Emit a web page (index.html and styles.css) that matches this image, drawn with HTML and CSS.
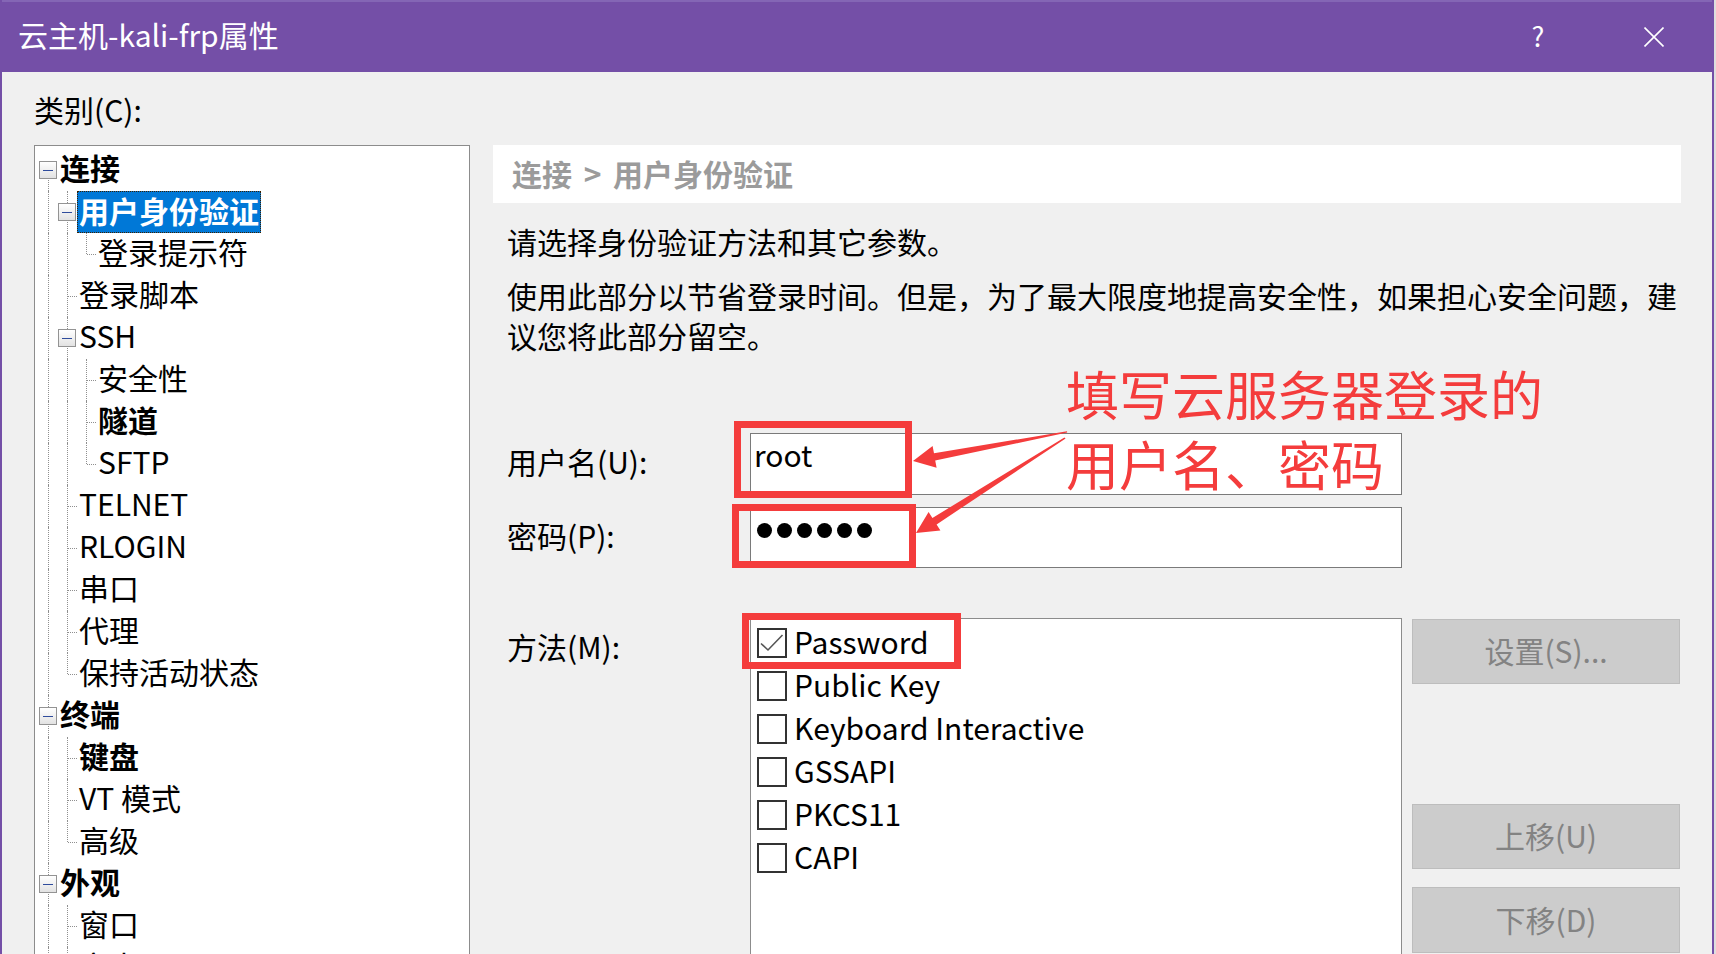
FILE: index.html
```html
<!DOCTYPE html>
<html lang="zh-CN">
<head>
<meta charset="utf-8">
<title>云主机-kali-frp属性</title>
<link rel="stylesheet" href="styles.css">
</head>
<body>
<div class="window">
  <header class="titlebar">
    <div class="title">云主机-kali-frp属性</div>
    <div class="tbtn help">?</div>
    <div class="tbtn close">
      <svg width="20" height="20" viewBox="0 0 20 20"><path d="M0.5 0.5 L19.5 19.5 M19.5 0.5 L0.5 19.5" stroke="#fff" stroke-width="1.6" fill="none"/></svg>
    </div>
  </header>
  <main class="client">
    <div class="cat">类别(C):</div>
    <div class="columns">
      <div class="tree">
        <div class="row"><span class="slot b"><span class="tog"></span></span><span class="lbl b">连接</span></div>
        <div class="row"><span class="g on"></span><span class="slot tb"><span class="tog"></span></span><span class="lbl b sel">用户身份验证</span></div>
        <div class="row"><span class="g on"></span><span class="g on"></span><span class="slot t h"></span><span class="lbl">登录提示符</span></div>
        <div class="row"><span class="g on"></span><span class="slot tb h"></span><span class="lbl">登录脚本</span></div>
        <div class="row"><span class="g on"></span><span class="slot tb"><span class="tog"></span></span><span class="lbl">SSH</span></div>
        <div class="row"><span class="g on"></span><span class="g on"></span><span class="slot tb h"></span><span class="lbl">安全性</span></div>
        <div class="row"><span class="g on"></span><span class="g on"></span><span class="slot tb h"></span><span class="lbl b">隧道</span></div>
        <div class="row"><span class="g on"></span><span class="g on"></span><span class="slot t h"></span><span class="lbl">SFTP</span></div>
        <div class="row"><span class="g on"></span><span class="slot tb h"></span><span class="lbl">TELNET</span></div>
        <div class="row"><span class="g on"></span><span class="slot tb h"></span><span class="lbl">RLOGIN</span></div>
        <div class="row"><span class="g on"></span><span class="slot tb h"></span><span class="lbl">串口</span></div>
        <div class="row"><span class="g on"></span><span class="slot tb h"></span><span class="lbl">代理</span></div>
        <div class="row"><span class="g on"></span><span class="slot t h"></span><span class="lbl">保持活动状态</span></div>
        <div class="row"><span class="slot tb"><span class="tog"></span></span><span class="lbl b">终端</span></div>
        <div class="row"><span class="g on"></span><span class="slot tb h"></span><span class="lbl b">键盘</span></div>
        <div class="row"><span class="g on"></span><span class="slot tb h"></span><span class="lbl">VT 模式</span></div>
        <div class="row"><span class="g on"></span><span class="slot t h"></span><span class="lbl">高级</span></div>
        <div class="row"><span class="slot tb"><span class="tog"></span></span><span class="lbl b">外观</span></div>
        <div class="row"><span class="g on"></span><span class="slot tb h"></span><span class="lbl">窗口</span></div>
        <div class="row"><span class="g on"></span><span class="slot tb h"></span><span class="lbl">突出</span></div>
      </div>
      <section class="panel">
        <div class="crumb">连接<span class="sep">&gt;</span>用户身份验证</div>
        <p class="desc d1">请选择身份验证方法和其它参数。</p>
        <p class="desc d2">使用此部分以节省登录时间。但是，为了最大限度地提高安全性，如果担心安全问题，建议您将此部分留空。</p>
        <div class="form">
          <div class="flabel">用户名(U):</div>
          <div class="input"><span class="val">root</span></div>
          <div></div>
          <div class="flabel">密码(P):</div>
          <div class="input pw"><span class="dot"></span><span class="dot"></span><span class="dot"></span><span class="dot"></span><span class="dot"></span><span class="dot"></span></div>
          <div></div>
          <div class="flabel mlabel">方法(M):</div>
          <div class="methods">
            <div class="m"><span class="cb"><svg width="26" height="26" viewBox="0 0 26 26"><path d="M2 13.5 L9 20 L23.5 5" stroke="#555" stroke-width="1.6" fill="none"/></svg></span><span class="mt">Password</span></div>
            <div class="m"><span class="cb"></span><span class="mt">Public Key</span></div>
            <div class="m"><span class="cb"></span><span class="mt">Keyboard Interactive</span></div>
            <div class="m"><span class="cb"></span><span class="mt">GSSAPI</span></div>
            <div class="m"><span class="cb"></span><span class="mt">PKCS11</span></div>
            <div class="m"><span class="cb"></span><span class="mt">CAPI</span></div>
          </div>
          <div class="btns">
            <div class="btn">设置(S)...</div>
            <div class="btn up">上移(U)</div>
            <div class="btn down">下移(D)</div>
          </div>
        </div>
      </section>
    </div>
  </main>
</div>

<svg class="marks" width="1716" height="954" viewBox="0 0 1716 954">
  <g fill="none" stroke="#f43c3c" stroke-width="7">
    <rect x="737.5" y="424.5" width="171" height="70"/>
    <rect x="735.5" y="507.5" width="177" height="57"/>
    <rect x="745.5" y="616.5" width="212" height="49"/>
  </g>
  <g fill="#f43c3c">
    <polygon points="1067,431.2 934,453.3 932.6,446.1 913,461 936.6,467.7 935.2,460.6 1067.2,432.6"/>
    <polygon points="1065.6,438.6 936.6,524.4 940.4,530.5 916,533 928.6,511.9 932.4,518 1064.4,437.4"/>
  </g>
</svg>
<div class="note">填写云服务器登录的<br>用户名、密码</div>
</body>
</html>
```
FILE: styles.css
```css
* { box-sizing: border-box; }
html, body { margin: 0; width: 1716px; height: 954px; overflow: hidden; }
body {
  position: relative;
  background: #dedede;
  font-family: "Noto Sans CJK SC", "Noto Sans", sans-serif;
  color: #000;
}
.window {
  width: 1714px;
  height: 954px;
  background: #f0f0f0;
  border-left: 2px solid #744fa7;
  border-right: 2px solid #744fa7;
  display: flex;
  flex-direction: column;
  overflow: hidden;
}
.titlebar {
  flex: none;
  height: 72px;
  background: #744fa7;
  border-top: 2px solid #8466b5;
  display: flex;
  align-items: center;
  color: #fff;
}
.title { flex: 1; padding: 0 0 6px 16px; font-size: 30px; line-height: 40px; }
.tbtn { width: 116px; height: 70px; display: flex; align-items: center; justify-content: center; }
.help { font-size: 27px; line-height: 30px; padding-bottom: 2px; }
.close svg { display: block; }

.client { flex: 1; padding: 17px 31px 0 32px; min-height: 0; }
.cat { font-size: 30px; line-height: 40px; height: 40px; }
.columns { display: flex; gap: 23px; margin-top: 16px; }

/* tree */
.tree {
  flex: none;
  width: 436px;
  height: 830px;
  background: #fff;
  border: 1px solid #8c8c8c;
  padding: 3px 0 0 4px;
  overflow: hidden;
}
.row { display: flex; height: 42px; font-size: 30px; white-space: nowrap; }
.g, .slot { position: relative; flex: none; width: 19px; height: 42px; }
.g.on::before {
  content: ""; position: absolute; left: 9px; top: 0; height: 42px;
  border-left: 1px dotted #8f8f8f;
}
.slot.t::before, .slot.tb::before, .slot.b::before {
  content: ""; position: absolute; left: 9px; border-left: 1px dotted #8f8f8f;
}
.slot.t::before { top: 0; height: 21px; }
.slot.tb::before { top: 0; height: 42px; }
.slot.b::before { top: 21px; height: 21px; }
.slot.h::after {
  content: ""; position: absolute; left: 10px; top: 21px; width: 9px;
  border-top: 1px dotted #8f8f8f;
}
.tog {
  position: absolute; left: 0; top: 12px; width: 18px; height: 18px;
  border: 1px solid #939393;
  background: linear-gradient(#ffffff, #e2e2e2);
  z-index: 1;
}
.tog::after {
  content: ""; position: absolute; left: 3px; right: 3px; top: 8px; height: 1px;
  background: #2f4c9c;
}
.lbl { display: block; height: 42px; padding: 0 2px; line-height: 37px; }
.lbl.b { font-weight: 700; }
.lbl.sel {
  background: #0078d7; color: #fff;
  border: 1px dotted #3a2000;
  padding: 0 1px; line-height: 37px;
}

/* right panel */
.panel { flex: 1; min-width: 0; }
.crumb {
  height: 58px; background: #fff;
  padding: 1px 0 0 19px;
  font-size: 30px; line-height: 54px; font-weight: 700; color: #9b9b9b;
  white-space: nowrap;
}
.sep { display: inline-block; width: 41px; text-align: center; }
.desc { margin: 0; padding-left: 14px; font-size: 30px; line-height: 40px; }
.d1 { margin-top: 18px; }
.d2 { margin-top: 14px; }

.form {
  display: grid;
  grid-template-columns: 233px 652px 268px;
  column-gap: 10px;
  row-gap: 12px;
  padding-left: 14px;
  margin-top: 78px;
  font-size: 30px;
}
.flabel { align-self: center; line-height: 40px; padding-bottom: 6px; }
.mlabel { align-self: start; margin-top: 46px; }
.input {
  height: 62px; background: #fff; border: 1px solid #7a7a7a;
  padding: 0 0 0 3px; line-height: 40px;
}
.input.pw { height: 61px; padding: 15px 0 0 6px; display: flex; gap: 5px; }
.dot { width: 15px; height: 15px; border-radius: 50%; background: #000; }

.methods {
  margin-top: 38px;
  height: 400px; background: #fff; border: 1px solid #8c8c8c;
  padding: 2px 0 0 6px;
}
.m { display: flex; align-items: center; height: 43px; white-space: nowrap; }
.mt { line-height: 38px; padding-bottom: 4px; }
.cb {
  flex: none; width: 30px; height: 30px; border: 2px solid #333; background: #fff;
  margin-right: 7px; display: flex; align-items: center; justify-content: center;
}
.cb svg { display: block; }

.btns { margin-top: 39px; display: flex; flex-direction: column; }
.btn {
  height: 65px; background: #cccccc; border: 1px solid #bdbdbd;
  color: #838383; font-size: 30px; line-height: 40px; padding-bottom: 3px;
  display: flex; align-items: center; justify-content: center;
}
.btn.up { margin-top: 120px; }
.btn.down { margin-top: 18px; height: 66px; }

/* annotations */
.marks { position: absolute; left: 0; top: 0; pointer-events: none; }
.note {
  position: absolute; left: 1066px; top: 358px;
  font-size: 53px; line-height: 70px; color: #f43c3c; white-space: nowrap;
}
```
